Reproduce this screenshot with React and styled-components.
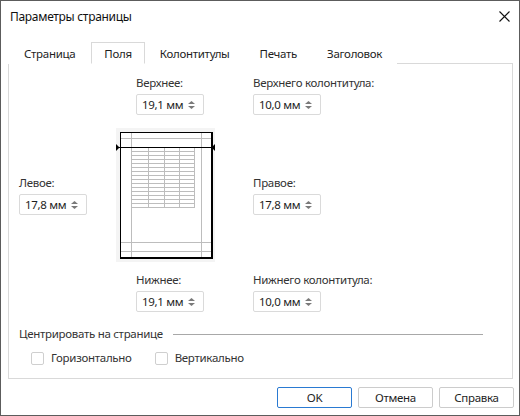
import React from 'react'
import styled, { createGlobalStyle } from 'styled-components'

const GlobalStyle = createGlobalStyle`
  html, body {
    margin: 0;
    padding: 0;
    background: #fff;
  }
  body {
    font-family: 'Noto Sans', 'Open Sans', sans-serif;
    font-size: 11.5px;
    letter-spacing: -0.3px;
    color: #1e1e1e;
  }
`

const Window = styled.div`
  width: 520px;
  height: 416px;
  box-sizing: border-box;
  border: 1px solid #5c5c5c;
  background: #fff;
  display: flex;
  flex-direction: column;
`

const TitleBar = styled.div`
  height: 30px;
  display: flex;
  align-items: center;
  justify-content: space-between;
  padding: 0 9px 0 9px;
  font-size: 12px;
  color: #111;
`

const CloseButton = styled.div`
  width: 12px;
  height: 12px;
  display: flex;
  align-items: center;
  justify-content: center;
`

const Body = styled.div`
  padding: 11px 5px 0 7px;
  display: flex;
  flex-direction: column;
`

const Tabs = styled.div`
  display: flex;
  height: 22px;
  position: relative;
  z-index: 1;
`

const Tab = styled.div`
  box-sizing: border-box;
  height: ${p => (p.active ? '22px' : '21px')};
  margin-top: ${p => (p.active ? '0' : '1px')};
  padding: 0 ${p => p.pad || 14}px;
  display: flex;
  align-items: center;
  border: 1px solid ${p => (p.active ? '#d9d9d9' : 'transparent')};
  border-bottom: 1px solid ${p => (p.active ? '#fff' : 'transparent')};
  background: #fff;
  color: #1e1e1e;
  white-space: nowrap;
`

const Panel = styled.div`
  box-sizing: border-box;
  margin-top: -1px;
  width: 505px;
  height: 316px;
  border: 1px solid #d9d9d9;
  padding: 11px 10px 0 10px;
  display: flex;
  flex-direction: column;
`

const MarginGrid = styled.div`
  display: grid;
  grid-template-columns: 97px 137px 1fr;
  grid-template-rows: auto auto auto;
`

const Field = styled.div`
  display: flex;
  flex-direction: column;
  gap: 3px;
  padding-left: ${p => p.indent || 0}px;
  align-self: ${p => (p.center ? 'center' : 'start')};
  margin-top: ${p => p.top || 0}px;
`

const Label = styled.div`
  line-height: 16px;
  color: #333;
  white-space: nowrap;
`

const Spin = styled.div`
  box-sizing: border-box;
  width: 68px;
  height: 21px;
  border: 1px solid #dadada;
  border-radius: 2px;
  display: flex;
  align-items: center;
  justify-content: space-between;
  padding: 0 8px 0 5px;
  color: #1e1e1e;
  background: #fff;
`

const SpinArrows = styled.div`
  display: flex;
  flex-direction: column;
  gap: 2px;
`

const Preview = styled.div`
  margin-top: 13px;
  width: 99px;
  height: 134px;
`

const CenterRow = styled.div`
  margin-top: 14px;
  display: flex;
  align-items: center;
  gap: 10px;
  line-height: 16px;
  color: #333;
`

const Rule = styled.div`
  flex: 1;
  height: 1px;
  background: #a8a8a8;
  margin-right: 19px;
`

const Checks = styled.div`
  margin-top: 8px;
  padding-left: 12px;
  display: flex;
  gap: 23px;
`

const Check = styled.label`
  display: flex;
  align-items: center;
  gap: 7px;
  line-height: 16px;
  color: #333;
`

const Box = styled.span`
  box-sizing: border-box;
  width: 13px;
  height: 13px;
  border: 1px solid #cfcfcf;
  border-radius: 2px;
  background: #fff;
`

const Footer = styled.div`
  display: flex;
  justify-content: flex-end;
  gap: 6px;
  padding: 8px 0 0 0;
`

const Button = styled.div`
  box-sizing: border-box;
  width: 75px;
  height: 21px;
  border: 1px solid ${p => (p.primary ? '#2a7ad2' : '#cccccc')};
  border-radius: 2px;
  display: flex;
  align-items: center;
  justify-content: center;
  color: #1e1e1e;
  background: #fff;
`

const SpinBox = ({ value }) => (
  <Spin>
    <span>{value}</span>
    <SpinArrows>
      <svg width="7" height="3" viewBox="0 0 7 3">
        <path d="M0 3 L3.5 0 L7 3 Z" fill="#7a7a7a" />
      </svg>
      <svg width="7" height="3" viewBox="0 0 7 3">
        <path d="M0 0 L3.5 3 L7 0 Z" fill="#7a7a7a" />
      </svg>
    </SpinArrows>
  </Spin>
)

const PagePreview = () => {
  const rows = []
  for (let y = 19; y <= 80; y += 4) rows.push(y)
  const cols = [15, 32, 48, 63, 78]
  return (
    <svg width="99" height="134" viewBox="0 0 99 134">
      <rect x="0" y="0" width="99" height="134" fill="#f4f4f4" />
      <rect x="4" y="4" width="93" height="127" fill="#000" />
      <rect x="5" y="5" width="90" height="124" fill="#fff" />
      <g stroke="#bdbdbd" strokeWidth="1">
        <line x1="15.5" y1="5" x2="15.5" y2="129" />
        <line x1="85.5" y1="5" x2="85.5" y2="129" />
        <line x1="5" y1="10.5" x2="95" y2="10.5" />
        <line x1="5" y1="114.5" x2="95" y2="114.5" />
        <line x1="5" y1="123.5" x2="95" y2="123.5" />
        {rows.map(y => (
          <line key={y} x1="15" y1={y + 0.5} x2="78" y2={y + 0.5} />
        ))}
        {cols.map(x => (
          <line key={x} x1={x + 0.5} y1="19" x2={x + 0.5} y2="80" />
        ))}
      </g>
      <line x1="3" y1="19.5" x2="96" y2="19.5" stroke="#000" strokeWidth="1" />
      <path d="M0 16 L3.5 19.5 L0 23 Z" fill="#000" />
      <path d="M99 16 L95.5 19.5 L99 23 Z" fill="#000" />
    </svg>
  )
}

export default function App() {
  return (
    <>
      <GlobalStyle />
      <Window>
        <TitleBar>
          <span>Параметры страницы</span>
          <CloseButton>
            <svg width="11" height="11" viewBox="0 0 11 11">
              <path d="M0.5 0.5 L10.5 10.5 M10.5 0.5 L0.5 10.5" stroke="#111" strokeWidth="1.1" />
            </svg>
          </CloseButton>
        </TitleBar>
        <Body>
          <Tabs>
            <Tab pad={15}>Страница</Tab>
            <Tab active pad={12}>Поля</Tab>
            <Tab>Колонтитулы</Tab>
            <Tab>Печать</Tab>
            <Tab>Заголовок</Tab>
          </Tabs>
          <Panel>
            <MarginGrid>
              <div />
              <Field indent={20}>
                <Label>Верхнее:</Label>
                <SpinBox value="19,1 мм" />
              </Field>
              <Field>
                <Label>Верхнего колонтитула:</Label>
                <SpinBox value="10,0 мм" />
              </Field>

              <Field center top={13}>
                <Label>Левое:</Label>
                <SpinBox value="17,8 мм" />
              </Field>
              <Preview>
                <PagePreview />
              </Preview>
              <Field center top={13}>
                <Label>Правое:</Label>
                <SpinBox value="17,8 мм" />
              </Field>

              <div />
              <Field indent={20} top={10}>
                <Label>Нижнее:</Label>
                <SpinBox value="19,1 мм" />
              </Field>
              <Field top={10}>
                <Label>Нижнего колонтитула:</Label>
                <SpinBox value="10,0 мм" />
              </Field>
            </MarginGrid>
            <CenterRow>
              <span>Центрировать на странице</span>
              <Rule />
            </CenterRow>
            <Checks>
              <Check>
                <Box />
                Горизонтально
              </Check>
              <Check>
                <Box />
                Вертикально
              </Check>
            </Checks>
          </Panel>
          <Footer>
            <Button primary>OK</Button>
            <Button>Отмена</Button>
            <Button>Справка</Button>
          </Footer>
        </Body>
      </Window>
    </>
  )
}
